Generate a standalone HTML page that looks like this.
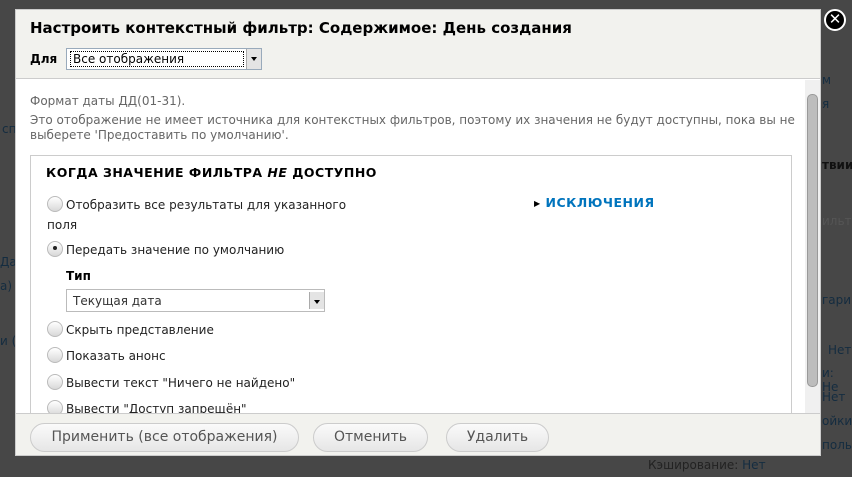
<!DOCTYPE html>
<html><head><meta charset="utf-8"><style>
*{box-sizing:border-box;margin:0;padding:0}
body{width:852px;height:477px;overflow:hidden;background:#474747;font-family:"DejaVu Sans","Liberation Sans",sans-serif;position:relative}
.bg{position:absolute;color:#142c40;font-size:12px}
.dlg{position:absolute;left:15px;top:9px;width:806px;height:447px;background:#fff;border:1px solid #ccc}
.hd{position:absolute;left:0;top:0;width:804px;height:69px;background:#f2f2ee;border-bottom:1px solid #ccc}
.hd h1{position:absolute;left:14px;top:9px;font-size:15px;font-weight:bold;color:#000}
.hd .lab{position:absolute;left:14px;top:42px;font-size:12px;font-weight:bold}
.sel{position:absolute;background:#fff;border:1px solid #bbb;font-size:12px;color:#000}
.sel .ar{position:absolute;right:0;top:0;bottom:0;width:15px;background:#e4e4e4;border-left:1px solid #aaa}
.sel .ar:after{content:"";position:absolute;left:4px;top:8px;border:3px solid transparent;border-top:4px solid #000}
.ct{position:absolute;left:0;top:70px;width:789px;height:333px;overflow:hidden}
.txt{position:absolute;left:14px;font-size:12px;color:#666;line-height:15px}
.fs{position:absolute;left:14px;top:75px;width:762px;height:300px;border:1px solid #ccc}
.fs h2{position:absolute;left:15px;top:9px;font-size:12.5px;font-weight:bold;letter-spacing:.5px}
.r{position:absolute;left:16px;font-size:12px;color:#222}
.r i{display:inline-block;width:16px;height:16px;border-radius:50%;border:1px solid #bbb;background:linear-gradient(#fff,#d8d8d8);vertical-align:-3px;margin-right:3px;position:relative}
.r i.on:after{content:"";position:absolute;left:5px;top:4px;width:4px;height:4px;border-radius:50%;background:#222}
.sb{position:absolute;left:789px;top:70px;width:15px;height:333px;background:#f0f0f0}
.thumb{position:absolute;left:2px;top:14px;width:11px;height:293px;background:#bdbdbd;border:1px solid #999;border-radius:5px}
.ft{position:absolute;left:0;top:403px;width:804px;height:42px;background:#f2f2ee;border-top:1px solid #ccc}
.btn{position:absolute;top:9px;height:29px;border:1px solid #ccc;border-radius:15px;background:linear-gradient(#fafafa,#e6e6e6);font-size:14px;color:#555;text-align:center;line-height:27px}
.close{position:absolute;left:824px;top:9px;width:22px;height:22px;border-radius:50%;background:#000;border:2px solid #fff;color:#fff;font-size:15px;font-weight:bold;text-align:center;line-height:17px}
</style></head><body>
<div class="bg" style="left:822px;top:73px">м</div>
<div class="bg" style="left:822px;top:97px">я</div>
<div class="bg" style="left:822px;top:158px;color:#111;font-weight:bold">твии</div>
<div class="bg" style="left:822px;top:214px;color:#555">ильтр</div>
<div class="bg" style="left:822px;top:293px">гария</div>
<div class="bg" style="left:828px;top:343px">Нет</div>
<div class="bg" style="left:822px;top:366px">и: Не</div>
<div class="bg" style="left:822px;top:390px">Нет</div>
<div class="bg" style="left:822px;top:414px">ойки</div>
<div class="bg" style="left:822px;top:438px">польз</div>
<div class="bg" style="left:648px;top:458px;color:#222">Кэширование: <span style="color:#142c40">Нет</span></div>
<div class="bg" style="left:2px;top:122px">сп</div>
<div class="bg" style="left:0;top:255px">Да</div>
<div class="bg" style="left:0;top:279px">а)</div>
<div class="bg" style="left:0;top:334px">и (</div>
<div class="dlg">
<div class="hd"><h1>Настроить контекстный фильтр: Содержимое: День создания</h1>
<div class="lab">Для</div>
<div class="sel" style="left:50px;top:38px;width:196px;height:22px;border-color:#9ab;"><span style="position:absolute;left:3px;top:2px;border:1px dotted #000;right:17px;bottom:2px;padding-left:2px;line-height:15px">Все отображения</span><div class="ar"></div></div>
</div>
<div class="ct">
<div class="txt" style="top:14px">Формат даты ДД(01-31).</div>
<div class="txt" style="top:33px;width:770px">Это отображение не имеет источника для контекстных фильтров, поэтому их значения не будут доступны, пока вы не выберете 'Предоставить по умолчанию'.</div>
<div class="fs"><h2>КОГДА ЗНАЧЕНИЕ ФИЛЬТРА <em>НЕ</em> ДОСТУПНО</h2>
<div class="r" style="top:40px"><i></i>Отобразить все результаты для указанного</div>
<div class="r" style="top:62px">поля</div>
<div class="r" style="top:85px"><i class="on"></i>Передать значение по умолчанию</div>
<div class="r" style="left:35px;top:113px;font-weight:bold;color:#000">Тип</div>
<div class="sel" style="left:35px;top:133px;width:259px;height:23px"><span style="position:absolute;left:6px;top:4px;color:#333">Текущая дата</span><div class="ar" style="top:2px;bottom:2px"></div></div>
<div class="r" style="top:165px"><i></i>Скрыть представление</div>
<div class="r" style="top:191px"><i></i>Показать анонс</div>
<div class="r" style="top:218px"><i></i>Вывести текст "Ничего не найдено"</div>
<div class="r" style="top:244px"><i></i>Вывести "Доступ запрещён"</div>
<div style="position:absolute;left:503px;top:39px;font-size:12.5px;font-weight:bold;color:#0074bd;letter-spacing:.5px"><span style="color:#000;font-size:8px;vertical-align:1px">▶</span> ИСКЛЮЧЕНИЯ</div>
</div>
</div>
<div class="sb"><div class="thumb"></div></div>
<div class="ft">
<div class="btn" style="left:14px;width:269px">Применить (все отображения)</div>
<div class="btn" style="left:297px;width:115px">Отменить</div>
<div class="btn" style="left:430px;width:103px">Удалить</div>
</div>
</div>
<div class="close">✕</div>
</body></html>
